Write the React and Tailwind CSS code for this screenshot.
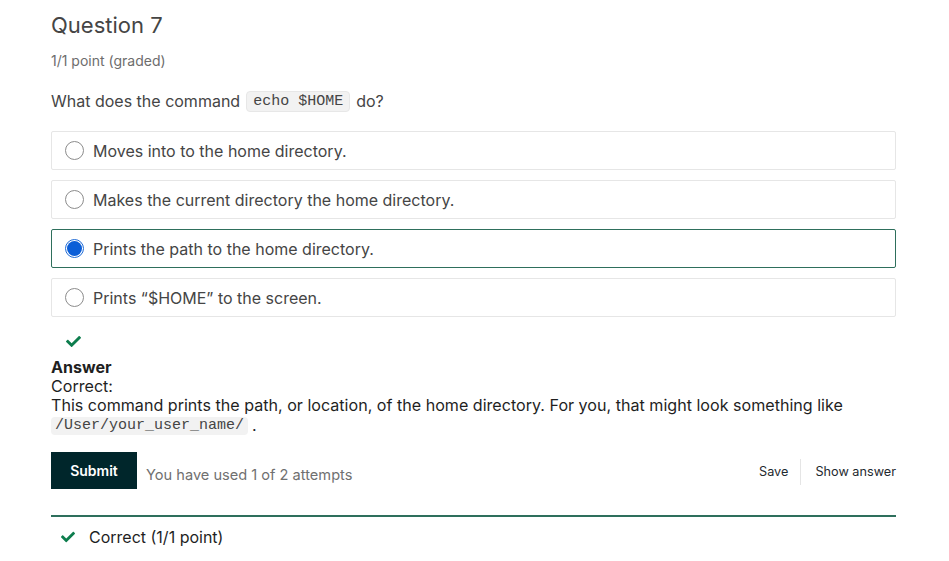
import React from 'react';
import { FaCheck } from 'react-icons/fa';

const options = [
  { id: 'a', label: 'Moves into to the home directory.' },
  { id: 'b', label: 'Makes the current directory the home directory.' },
  { id: 'c', label: 'Prints the path to the home directory.', selected: true },
  { id: 'd', label: 'Prints \u201C$HOME\u201D to the screen.' },
];

function Radio({ selected }) {
  if (selected) {
    return (
      <span className="w-[19px] h-[19px] rounded-full border border-[#1f6bd6] bg-white flex items-center justify-center shrink-0">
        <span className="w-[15px] h-[15px] rounded-full bg-[#0b5ed7]" />
      </span>
    );
  }
  return <span className="w-[19px] h-[19px] rounded-full border border-[#8c8c8c] bg-white shrink-0" />;
}

export default function App() {
  return (
    <div className="w-[949px] h-[561px] bg-white pl-[51px] pr-[53px] text-[#454545] font-['Inter',sans-serif] overflow-hidden">
      <h2 className="text-[22px] leading-[28px] pt-[11px] text-[#454545]">Question 7</h2>
      <div className="text-[14px] leading-[18px] mt-[13px] text-[#6d6d6d]">1/1 point (graded)</div>

      <p className="h-[24px] text-[16px] mt-[19px] flex items-center">
        What does the command
        <code className="mx-[6px] px-[6px] py-[1px] bg-[#f2f2f2] border border-[#e7e7e7] rounded-sm text-[15px] leading-[17px] text-[#454545] font-['Liberation_Mono',monospace]">
          echo $HOME
        </code>
        do?
      </p>

      <div className="mt-[18px] flex flex-col gap-[10px]">
        {options.map((o) => (
          <label
            key={o.id}
            className={
              o.selected
                ? 'h-[39px] flex items-center gap-[9px] px-[13px] border border-[#2e6f5c] rounded-[2px]'
                : 'h-[39px] flex items-center gap-[9px] px-[13px] border border-[#e6e6e6] rounded-[2px]'
            }
          >
            <Radio selected={o.selected} />
            <span className="text-[16px] leading-[20px]">{o.label}</span>
          </label>
        ))}
      </div>

      <div className="mt-[17px] pl-[15px]">
        <FaCheck className="w-[15px] h-[15px] text-[#0d7d4d]" />
      </div>

      <div className="mt-[9px] text-[16.1px] leading-[19px] text-[#1f1f1f]">
        <div className="font-bold">Answer</div>
        <div>Correct:</div>
        <div>
          This command prints the path, or location, of the home directory. For you, that might look something like
        </div>
        <div className="flex items-center mt-[1px]">
          <code className="px-[4px] bg-[#f2f2f2] rounded-sm text-[15px] leading-[18px] text-[#454545] font-['Liberation_Mono',monospace]">
            /User/your_user_name/
          </code>
          <span className="ml-[4px]">.</span>
        </div>
      </div>

      <div className="mt-[17px] flex items-center">
        <button className="w-[86px] h-[37px] bg-[#00262b] text-white text-[14px] font-semibold">Submit</button>
        <span className="ml-[9px] mt-[11px] text-[14.6px] text-[#707070]">You have used 1 of 2 attempts</span>
        <div className="ml-auto mt-[2px] flex items-center text-[12.7px] text-[#1f2a30]">
          <span className="pr-[12px]">Save</span>
          <span className="w-px h-[26px] bg-[#e5e5e5]" />
          <span className="pl-[14px]">Show answer</span>
        </div>
      </div>

      <div className="mt-[26px] border-t-2 border-[#2e6f5c] flex items-center pt-[9px] pl-[10px]">
        <FaCheck className="w-[14px] h-[14px] text-[#0d7d4d]" />
        <span className="ml-[14px] text-[16px] leading-[22px] text-[#1f1f1f]">Correct (1/1 point)</span>
      </div>
    </div>
  );
}
